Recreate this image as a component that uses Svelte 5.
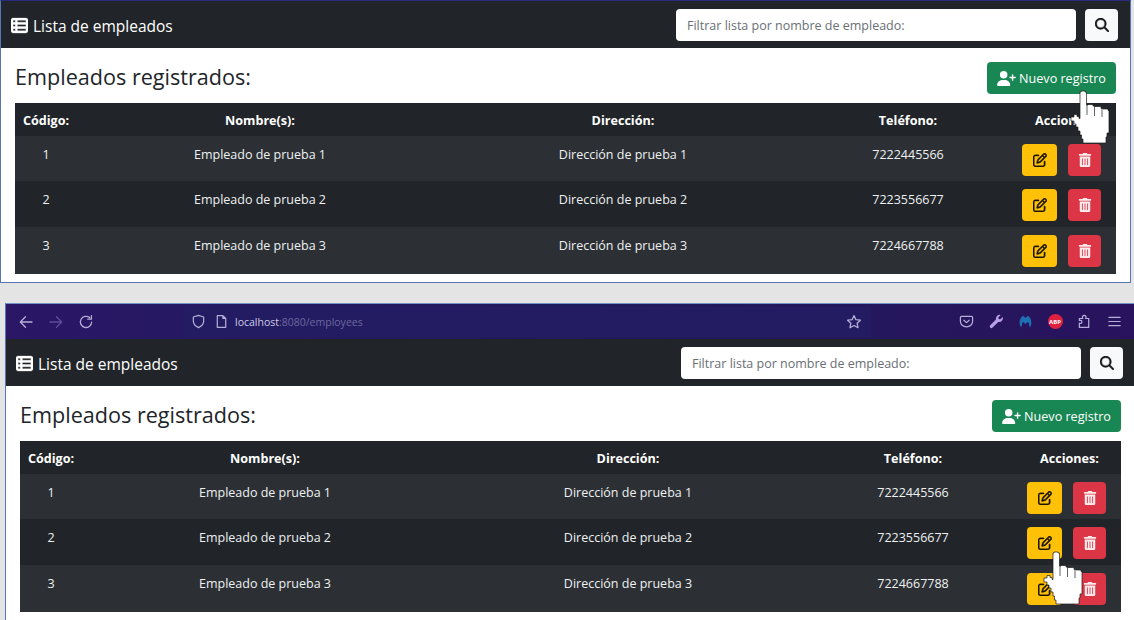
<script>
  const rows = [
    { id: 1, phone: '7222445566' },
    { id: 2, phone: '7223556677' },
    { id: 3, phone: '7224667788' }
  ];
</script>

{#snippet panel(browser)}
  <section class="panel" class:second={browser}>
    {#if browser}
      <div class="chrome">
        <div class="navs">
          <svg class="ci" viewBox="0 0 16 16"><path d="M14 8H2.500M7.500 2.800 2.300 8l5.200 5.200" /></svg>
          <svg class="ci dim" viewBox="0 0 16 16"><path d="M2 8h11.500M8.500 2.800 13.700 8l-5.200 5.200" /></svg>
          <svg class="ci" viewBox="0 0 16 16"><path d="M13.600 8.200A5.600 5.600 0 1 1 11.600 3.600M13.400 1.600v3.600H9.800" /></svg>
        </div>
        <div class="address">
          <svg class="ci small" viewBox="0 0 16 16"><path d="M8 1.500 2.500 3.200v4.300c0 3.300 2.500 5.700 5.500 7 3-1.300 5.500-3.700 5.500-7V3.200z" /></svg>
          <svg class="ci small" viewBox="0 0 16 16"><path d="M3.500 1.800h6l3 3v9.400h-9zM9.500 1.800v3h3" /></svg>
          <span class="url"><b>localhost</b>:8080/employees</span>
          <svg class="ci star" viewBox="0 0 16 16"><path d="m8 1.600 1.900 4.100 4.500.5-3.300 3 .9 4.500L8 11.500l-4 2.200.9-4.500-3.300-3 4.500-.5z" /></svg>
        </div>
        <div class="tools">
          <svg class="ci small" viewBox="0 0 16 16"><path d="M2.800 2.500h10.400c.7 0 1.300.6 1.300 1.300v4c0 3.400-2.900 6-6.500 6s-6.500-2.600-6.500-6v-4c0-.7.6-1.300 1.300-1.300zM5.200 6.600 8 9.200l2.800-2.600" /></svg>
          <svg class="tool-fill" viewBox="0 0 16 16"><path fill="#b7a0e8" d="M14.600 3.200 12 5.600l-1.700-.3-.4-1.700L12.400 1.100a4 4 0 0 0-5 4.800L1.300 12a1.700 1.700 0 0 0 2.500 2.500L9.900 8.500a4 4 0 0 0 4.700-5.300z" /></svg>
          <svg class="tool-fill" viewBox="0 0 16 16"><path fill="#1f6fb5" d="M8 4.200 10.200 2.200c2.400.4 4.300 3.600 4 8.300-.1 1.300-.6 2.700-1.400 3.400-.9-.3-1-2.300-1.200-4.400L10 8.500 8 10.800 6 8.500 4.400 9.500c-.2 2.100-.3 4.100-1.200 4.400-.8-.7-1.300-2.100-1.400-3.400-.3-4.700 1.600-7.900 4-8.300z" /></svg>
          <span class="abp">ABP</span>
          <svg class="ci small" viewBox="0 0 16 16"><path d="M2.500 14.300V9.800c1.600.7 2.800-.2 2.800-1.400S4.100 6.300 2.500 7V4.800h3.700c-1-1.400-.3-3.300 1.500-3.300s2.500 1.900 1.500 3.300h3.300v9.500z" /></svg>
          <svg class="ci small" viewBox="0 0 16 16"><path d="M2 3.500h12M2 8h12M2 12.500h12" /></svg>
        </div>
      </div>
    {/if}

    <nav class="navbar">
      <span class="brand">
        <svg class="brand-icon" viewBox="0 0 512 512"><path d="M0 96C0 60.700 28.700 32 64 32H448c35.300 0 64 28.700 64 64V416c0 35.300-28.700 64-64 64H64c-35.300 0-64-28.700-64-64V96zm64 0v64h64V96H64zm384 0H192v64H448V96zM64 224v64h64V224H64zm384 0H192v64H448V224zM64 352v64h64V352H64zm384 0H192v64H448V352z" /></svg>
        Lista de empleados
      </span>
      <form class="search" onsubmit={(e) => e.preventDefault()}>
        <input type="text" placeholder="Filtrar lista por nombre de empleado:" />
        <button class="search-btn" aria-label="Buscar">
          <svg viewBox="0 0 512 512"><path d="M416 208c0 45.900-14.900 88.300-40 122.700L502.600 457.400c12.500 12.500 12.500 32.800 0 45.300s-32.800 12.500-45.300 0L330.700 376c-34.400 25.200-76.800 40-122.700 40C93.100 416 0 322.900 0 208S93.100 0 208 0S416 93.100 416 208zM208 352a144 144 0 1 0 0-288 144 144 0 1 0 0 288z" /></svg>
        </button>
      </form>
    </nav>

    <div class="content">
      <header class="head">
        <h1>Empleados registrados:</h1>
        <button class="new">
          <svg viewBox="0 0 640 512"><path d="M96 128a128 128 0 1 1 256 0A128 128 0 1 1 96 128zM0 482.300C0 383.800 79.800 304 178.300 304h91.400C368.200 304 448 383.800 448 482.300c0 16.400-13.300 29.700-29.700 29.700H29.700C13.300 512 0 498.700 0 482.300zM504 312V248H440c-13.300 0-24-10.700-24-24s10.700-24 24-24h64V136c0-13.300 10.700-24 24-24s24 10.700 24 24v64h64c13.300 0 24 10.700 24 24s-10.700 24-24 24H552v64c0 13.300-10.700 24-24 24s-24-10.700-24-24z" /></svg>
          Nuevo registro
        </button>
      </header>

      <table>
        <colgroup>
          <col class="c1" /><col class="c2" /><col class="c3" /><col class="c4" /><col class="c5" />
        </colgroup>
        <thead>
          <tr>
            <th>Código:</th><th>Nombre(s):</th><th>Dirección:</th><th>Teléfono:</th><th>Acciones:</th>
          </tr>
        </thead>
        <tbody>
          {#each rows as r}
            <tr>
              <td>{r.id}</td>
              <td>Empleado de prueba {r.id}</td>
              <td>Dirección de prueba {r.id}</td>
              <td>{r.phone}</td>
              <td>
                <div class="actions">
                  <button class="act edit" aria-label="Editar">
                    <svg viewBox="0 0 512 512"><path d="M441 58.900L453.100 71c9.400 9.400 9.400 24.600 0 33.900L424 134.100 377.900 88 407 58.900c9.400-9.400 24.600-9.400 33.900 0zM209.800 256.200L344 121.900 390.100 168 255.800 302.200c-2.900 2.900-6.500 5-10.400 6.100l-58.500 16.700 16.700-58.500c1.100-3.900 3.200-7.500 6.100-10.400zM373.100 25L175.800 222.200c-8.700 8.700-15 19.400-18.300 31.100l-28.600 100c-2.400 8.400-.1 17.400 6.100 23.600s15.200 8.500 23.600 6.100l100-28.600c11.800-3.400 22.500-9.700 31.100-18.300L487 138.900c28.100-28.100 28.100-73.700 0-101.800L474.900 25C446.800-3.100 401.200-3.100 373.100 25zM88 64C39.400 64 0 103.400 0 152V424c0 48.600 39.400 88 88 88H360c48.600 0 88-39.400 88-88V312c0-13.300-10.700-24-24-24s-24 10.700-24 24V424c0 22.100-17.900 40-40 40H88c-22.100 0-40-17.900-40-40V152c0-22.100 17.900-40 40-40H200c13.300 0 24-10.700 24-24s-10.700-24-24-24H88z" /></svg>
                  </button>
                  <button class="act del" aria-label="Eliminar">
                    <svg viewBox="0 0 448 512"><path d="M32 464a48 48 0 0 0 48 48h288a48 48 0 0 0 48-48V128H32zm272-256a16 16 0 0 1 32 0v224a16 16 0 0 1-32 0zm-96 0a16 16 0 0 1 32 0v224a16 16 0 0 1-32 0zm-96 0a16 16 0 0 1 32 0v224a16 16 0 0 1-32 0zM432 32H312l-9.400-18.700A24 24 0 0 0 281.100 0H166.800a23.720 23.720 0 0 0-21.400 13.300L136 32H16A16 16 0 0 0 0 48v32a16 16 0 0 0 16 16h416a16 16 0 0 0 16-16V48a16 16 0 0 0-16-16z" /></svg>
                  </button>
                </div>
              </td>
            </tr>
          {/each}
        </tbody>
      </table>
    </div>
  </section>
{/snippet}

{#snippet hand(cls)}
  <svg class="hand {cls}" viewBox="-10 -1 40 55">
    <path d="M1 0H5V1H6.500V14H8V13.500H13V15H15V15.500H21V17.500H23V18H28V19.500H29V42H27V46H26V52H3V48H1.500V44H0V40H-2V36H-4V33H-6V30H-9V26H-6V23.500H-3V25.500H-1V27.500H0V1H1Z" />
    <path class="seam" d="M7 14V24M14.500 15V25M22 18V26" />
  </svg>
{/snippet}

<div class="page">
  {@render panel(false)}
  {@render panel(true)}
  {@render hand('h1')}
  {@render hand('h2')}
</div>

<style>
  :global(body) {
    margin: 0;
  }
  .page {
    position: relative;
    width: 1134px;
    height: 620px;
    overflow: hidden;
    background: #e4e4e4;
    font-family: "Open Sans", "Noto Sans", sans-serif;
    display: flex;
    flex-direction: column;
    gap: 20px;
  }
  .panel {
    flex: none;
    box-sizing: border-box;
    width: 1131px;
    background: #fff;
    border: 1px solid #5577b5;
    border-top-color: #2b2a80;
  }
  .panel.second {
    width: 1130px;
    margin-left: 5px;
    border-top-color: #6f90c8;
    border-right: none;
  }
  .chrome {
    display: flex;
    align-items: center;
    height: 35px;
    background: linear-gradient(90deg, #2a1766, #1f1b5c 50%, #29135e);
  }
  .navs {
    display: flex;
    gap: 14px;
    padding-left: 12px;
    width: 165px;
    box-sizing: border-box;
    flex: none;
  }
  .ci {
    width: 16px;
    height: 16px;
    flex: none;
    fill: none;
    stroke: #b5aed8;
    stroke-width: 1.3;
    stroke-linecap: round;
    stroke-linejoin: round;
  }
  .ci.dim {
    stroke: #5b4d96;
  }
  .ci.small {
    width: 15px;
    height: 15px;
  }
  .address {
    width: 688px;
    height: 30px;
    flex: none;
    box-sizing: border-box;
    margin-left: 12px;
    padding: 0 8px;
    display: flex;
    align-items: center;
    gap: 8px;
    background: #231c62;
  }
  .url {
    font-size: 10.500px;
    color: #6e679f;
    margin-left: -2px;
    flex: 1;
  }
  .url b {
    font-weight: 400;
    color: #cfcae6;
  }
  .star {
    margin-right: 1px;
  }
  .tools {
    display: flex;
    align-items: center;
    gap: 14.500px;
    margin-left: 88px;
  }
  .tool-fill {
    width: 15px;
    height: 15px;
    flex: none;
  }
  .abp {
    width: 15px;
    height: 15px;
    border-radius: 50%;
    background: #e0203f;
    color: #fff;
    font-size: 6px;
    font-weight: 700;
    display: flex;
    align-items: center;
    justify-content: center;
    flex: none;
  }
  .navbar {
    display: flex;
    align-items: center;
    justify-content: space-between;
    height: 47px;
    box-sizing: border-box;
    padding: 8px 12px 7px 10px;
    background: #212529;
  }
  .brand {
    color: #fff;
    font-size: 15.500px;
    display: flex;
    align-items: center;
    gap: 5px;
    padding-top: 1px;
  }
  .brand-icon {
    width: 17px;
    height: 17px;
    fill: #fff;
    stroke: #fff;
    stroke-width: 10;
  }
  .search {
    display: flex;
    gap: 9px;
  }
  .search input {
    width: 400px;
    height: 32px;
    box-sizing: border-box;
    border: 0;
    border-radius: 4px;
    padding: 0 11px;
    font: 12.500px "Open Sans", "Noto Sans", sans-serif;
    background: #fff;
  }
  .search input::placeholder {
    color: #6a6f75;
    opacity: 1;
  }
  .search-btn {
    width: 33px;
    height: 32px;
    border: 0;
    border-radius: 4px;
    background: #f8f9fa;
    display: flex;
    align-items: center;
    justify-content: center;
    padding: 0;
  }
  .search-btn svg {
    width: 14px;
    height: 14px;
    fill: #15181b;
    stroke: #15181b;
    stroke-width: 12;
  }
  .content {
    padding: 14px 14px 8px 14px;
  }
  .head {
    display: flex;
    align-items: center;
    justify-content: space-between;
    height: 32px;
    margin-bottom: 9px;
  }
  h1 {
    margin: 0;
    padding-bottom: 3px;
    font-size: 21.600px;
    font-weight: 400;
    color: #212529;
  }
  .new {
    width: 129px;
    height: 32px;
    border: 0;
    border-radius: 4px;
    background: #198754;
    color: #fff;
    font: 12.600px "Open Sans", "Noto Sans", sans-serif;
    display: flex;
    align-items: center;
    justify-content: center;
    gap: 3px;
    padding: 0;
  }
  .new svg {
    width: 19px;
    height: 15px;
    fill: #fff;
  }
  table {
    width: 1101px;
    table-layout: fixed;
    border-collapse: collapse;
    color: #fff;
    font-size: 12.500px;
  }
  .c1 { width: 62px; }
  .c2 { width: 366px; }
  .c3 { width: 360px; }
  .c4 { width: 210px; }
  .c5 { width: 103px; }
  th {
    height: 33px;
    padding: 1px 0 0;
    box-sizing: border-box;
    background: #212529;
    font-weight: 700;
    font-size: 12.600px;
    text-align: center;
  }
  td {
    padding: 9px 0 0;
    box-sizing: border-box;
    height: 45px;
    vertical-align: top;
    text-align: center;
    line-height: 20px;
    background: #2c3034;
    color: #eef0f2;
  }
  tbody tr:nth-child(2) td {
    background: #212529;
    height: 46px;
  }
  tbody tr:nth-child(3) td {
    height: 47px;
  }
  .actions {
    display: flex;
    gap: 11px;
    padding-left: 9px;
    margin-top: -1px;
  }
  .act {
    height: 32px;
    border: 0;
    border-radius: 4px;
    padding: 0;
    display: flex;
    align-items: center;
    justify-content: center;
  }
  .edit {
    width: 35px;
    background: #ffc107;
  }
  .del {
    width: 33px;
    background: #dc3545;
  }
  .act svg {
    width: 14px;
    height: 14px;
  }
  .edit svg {
    fill: #1b1505;
    stroke: #1b1505;
    stroke-width: 14;
  }
  .del svg {
    fill: #fff;
    opacity: .9;
  }
  .hand {
    position: absolute;
    width: 40px;
    height: 55px;
    fill: #fff;
    stroke: #1d1d1d;
    stroke-width: .7;
  }
  .seam {
    fill: none;
  }
  .h1 { left: 1070px; top: 90px; }
  .h2 { left: 1043px; top: 551px; }
</style>
